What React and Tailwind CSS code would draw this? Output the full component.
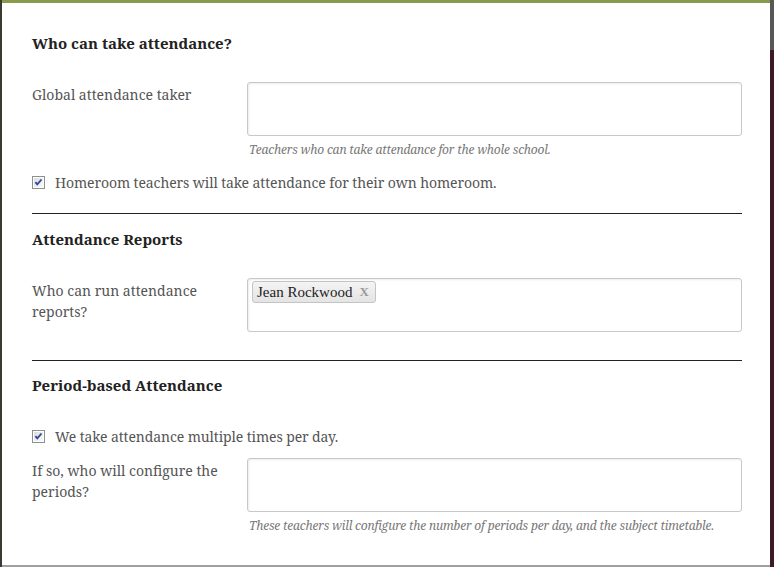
const Checkbox = () => (
  <svg width="13" height="13" viewBox="0 0 13 13" className="shrink-0">
    <defs>
      <linearGradient id="cbg" x1="0" y1="0" x2="1" y2="1">
        <stop offset="0" stopColor="#dcdcdc" />
        <stop offset="1" stopColor="#fbfbfb" />
      </linearGradient>
    </defs>
    <rect x="0.5" y="0.5" width="12" height="12" fill="#fff" stroke="#8e8f8f" />
    <rect x="2" y="2" width="9" height="9" fill="url(#cbg)" />
    <path d="M3.4 6.2 L5.3 8.4 L9.5 3.5" fill="none" stroke="#34479a" strokeWidth="1.9" />
  </svg>
);

const Field = ({ label, children }) => (
  <div className="flex">
    <div className="w-[215px] shrink-0 pt-[2px] pr-6 text-[14px] leading-[21px] text-[#555]">{label}</div>
    <div className="flex-1 flex items-start h-[54px] rounded-[3px] border border-[#c8c8c8] bg-white shadow-[inset_1px_1px_2px_rgba(0,0,0,0.08)] px-1 pt-[2px]">
      {children}
    </div>
  </div>
);

const Hint = ({ children, className }) => (
  <p className={`pl-[217px] text-[12px] leading-4 italic tracking-[-0.17px] text-[#777] ${className}`}>{children}</p>
);

const CheckRow = ({ children, className }) => (
  <div className={`flex items-center gap-[10px] text-[14px] leading-[21px] tracking-[-0.1px] text-[#555] ${className}`}>
    <Checkbox />
    <span>{children}</span>
  </div>
);

const Heading = ({ children, className }) => (
  <h2 className={`text-[15px] leading-5 font-bold text-[#222] ${className}`}>{children}</h2>
);

export default function App() {
  return (
    <div
      className="flex h-[567px] w-full overflow-hidden bg-[#3b3b33]"
      style={{ fontFamily: '"Noto Serif", "DejaVu Serif", Georgia, serif' }}
    >
      <div className="w-[2px] bg-[#3a3a32]" />
      <div className="flex-1 flex flex-col bg-white border-t-[3px] border-[#889a4b] border-b-2 border-b-[#a0a0a0]">
        <div className="pt-[30px] pl-[30px] pr-[28px]">
          <Heading>Who can take attendance?</Heading>

          <div className="mt-[29px]">
            <Field label="Global attendance taker" />
          </div>
          <Hint className="mt-[6px]">Teachers who can take attendance for the whole school.</Hint>
          <CheckRow className="mt-[14px]">Homeroom teachers will take attendance for their own homeroom.</CheckRow>

          <div className="mt-[20px] h-px bg-[#222]" />

          <Heading className="mt-[15px]">Attendance Reports</Heading>
          <div className="mt-[29px]">
            <Field label="Who can run attendance reports?">
              <span
                className="inline-flex items-center h-[22px] pl-[4px] pr-[6px] rounded-[3px] border border-[#c4c4c4] bg-gradient-to-b from-[#f4f4f4] to-[#e4e4e4] text-[15px] text-[#222]"
                style={{ fontFamily: '"Liberation Serif", "Times New Roman", serif' }}
              >
                Jean Rockwood
                <span className="ml-[7px] text-[13px] font-bold text-[#9a9a9a]">X</span>
              </span>
            </Field>
          </div>

          <div className="mt-[28px] h-px bg-[#222]" />

          <Heading className="mt-[14px]">Period-based Attendance</Heading>
          <CheckRow className="mt-[31px]">We take attendance multiple times per day.</CheckRow>
          <div className="mt-[11px]">
            <Field label="If so, who will configure the periods?" />
          </div>
          <Hint className="mt-[6px]">These teachers will configure the number of periods per day, and the subject timetable.</Hint>
        </div>
      </div>
      <div className="w-[4px] flex flex-col">
        <div className="h-[50px] bg-[#575757]" />
        <div className="flex-1 bg-[#3c1a26]" />
      </div>
    </div>
  );
}
